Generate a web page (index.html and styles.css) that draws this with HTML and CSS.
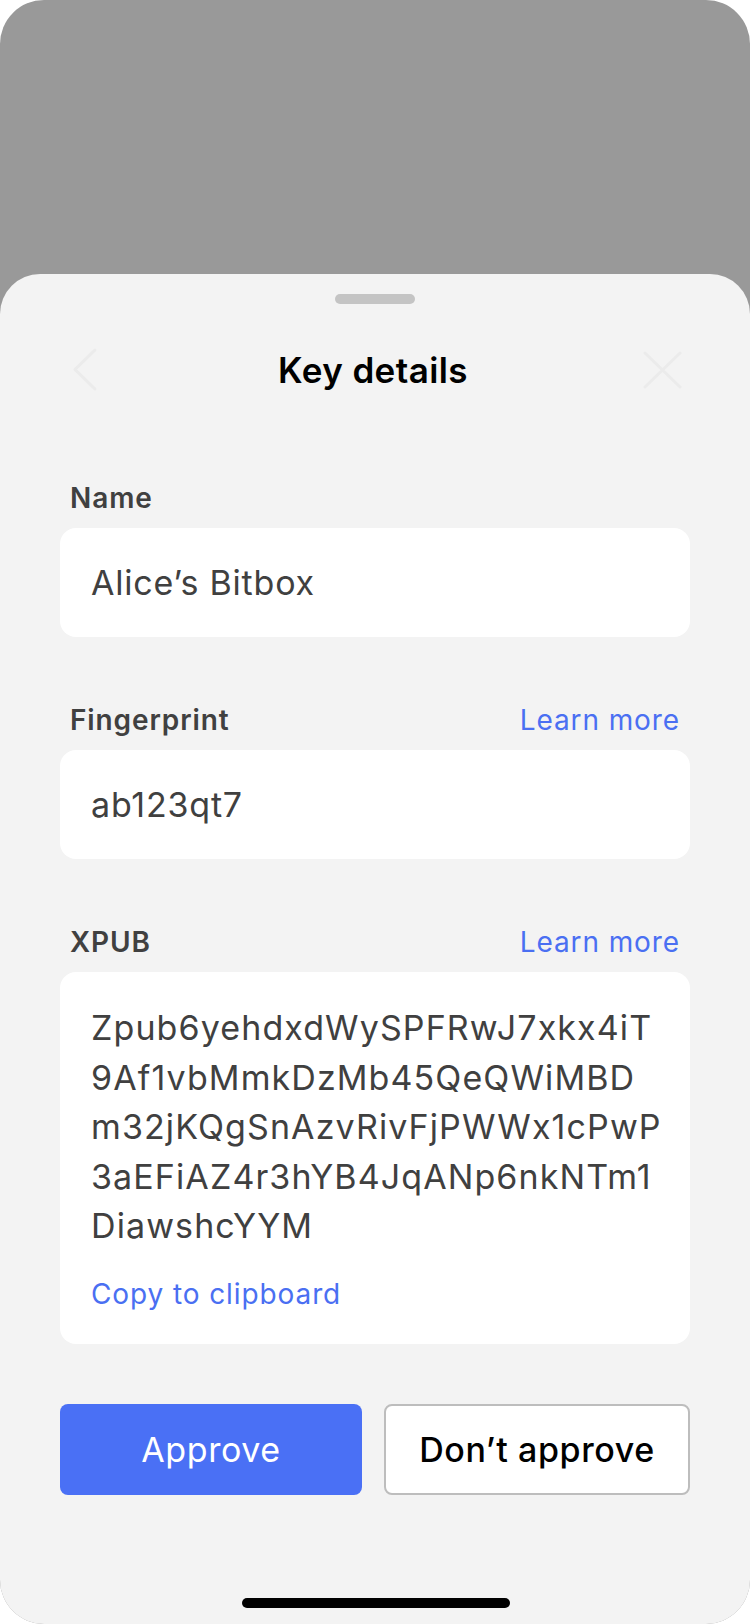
FILE: index.html
```html
<!DOCTYPE html>
<html lang="en">
<head>
<meta charset="utf-8">
<title>Key details</title>
<link rel="stylesheet" href="styles.css">
</head>
<body>
<div class="phone">
  <div class="backdrop"></div>
  <div class="sheet">
    <div class="grabber"></div>
    <div class="header">
      <svg class="hdr-icon" width="40" height="50" viewBox="0 0 40 50">
        <polyline points="31,5 11,24.5 31,44" fill="none" stroke="#ebebeb" stroke-width="3" stroke-linecap="round" stroke-linejoin="round"/>
      </svg>
      <h1 class="title">Key details</h1>
      <svg class="hdr-icon" width="40" height="50" viewBox="0 0 40 50">
        <path d="M3 8 L38 42 M38 8 L3 42" fill="none" stroke="#ebebeb" stroke-width="3" stroke-linecap="round"/>
      </svg>
    </div>
    <div class="content">
      <section class="field field-first">
        <div class="label-row"><span class="label">Name</span></div>
        <div class="card"><span class="value">Alice’s Bitbox</span></div>
      </section>
      <section class="field">
        <div class="label-row"><span class="label">Fingerprint</span><a class="link">Learn more</a></div>
        <div class="card"><span class="value">ab123qt7</span></div>
      </section>
      <section class="field">
        <div class="label-row"><span class="label">XPUB</span><a class="link">Learn more</a></div>
        <div class="card card-xpub">
          <p class="xpub">Zpub6yehdxdWySPFRwJ7xkx4iT<br>9Af1vbMmkDzMb45QeQWiMBD<br>m32jKQgSnAzvRivFjPWWx1cPwP<br>3aEFiAZ4r3hYB4JqANp6nkNTm1<br>DiawshcYYM</p>
          <a class="link copy">Copy to clipboard</a>
        </div>
      </section>
      <div class="buttons">
        <button class="btn btn-primary">Approve</button>
        <button class="btn btn-secondary">Don’t approve</button>
      </div>
    </div>
    <div class="home-indicator"></div>
  </div>
</div>
</body>
</html>
```
FILE: styles.css
```css
* { box-sizing: border-box; }
html, body { margin: 0; padding: 0; background: #ffffff; }
body {
  font-family: Inter, "Liberation Sans", Arial, sans-serif;
  width: 750px;
  height: 1624px;
  overflow: hidden;
}
.phone {
  width: 750px;
  height: 1624px;
  border-radius: 44px;
  overflow: hidden;
  background: #999999;
  display: flex;
  flex-direction: column;
}
.backdrop { height: 274px; flex: none; }
.sheet {
  flex: 1;
  background: #f3f3f3;
  border-radius: 40px 40px 0 0;
  display: flex;
  flex-direction: column;
  position: relative;
}
.grabber {
  width: 80px;
  height: 10px;
  border-radius: 5px;
  background: #c4c4c4;
  margin: 20px auto 0;
}
.header {
  height: 132px;
  display: flex;
  align-items: center;
  justify-content: space-between;
  padding: 0 68px 0 64px;
}
.hdr-icon { display: block; flex: none; }
.title {
  margin: 0;
  font-size: 35px;
  font-weight: 600;
  color: #000;
  letter-spacing: 0.4px;
}
.content { padding: 0 60px; }
.field { margin-top: 65px; }
.field-first { margin-top: 44px; }
.label-row {
  display: flex;
  justify-content: space-between;
  align-items: baseline;
  height: 36px;
  line-height: 36px;
  padding: 0 10px 0 10px;
  margin-bottom: 12px;
}
.label {
  font-size: 28px;
  font-weight: 600;
  color: #404040;
  letter-spacing: 0.9px;
}
.link {
  font-size: 28px;
  color: #4a6ff2;
  letter-spacing: 0.9px;
}
.card {
  background: #ffffff;
  border-radius: 16px;
  height: 109px;
  display: flex;
  align-items: center;
  padding: 0 31px;
}
.value {
  font-size: 34px;
  color: #404040;
  letter-spacing: 0.8px;
}
.card-xpub {
  height: auto;
  display: block;
  padding: 31px 31px 32px;
}
.xpub {
  margin: 0;
  font-size: 34px;
  line-height: 49.5px;
  color: #404040;
  letter-spacing: 1.1px;
}
.copy {
  display: block;
  margin-top: 25px;
  line-height: 36px;
}
.buttons {
  margin-top: 60px;
  display: flex;
  gap: 22px;
}
.btn {
  flex: 1;
  height: 91px;
  border-radius: 8px;
  font-family: inherit;
  font-size: 34px;
  letter-spacing: 0.6px;
  padding: 0;
}
.btn-primary {
  background: #4a70f5;
  color: #ffffff;
  border: none;
  font-weight: 400;
}
.btn-secondary {
  background: #ffffff;
  color: #000000;
  border: 2px solid #bdbdbd;
  font-weight: 470;
}
.home-indicator {
  position: absolute;
  left: 242px;
  bottom: 16px;
  width: 268px;
  height: 10px;
  border-radius: 5px;
  background: #000;
}
```
